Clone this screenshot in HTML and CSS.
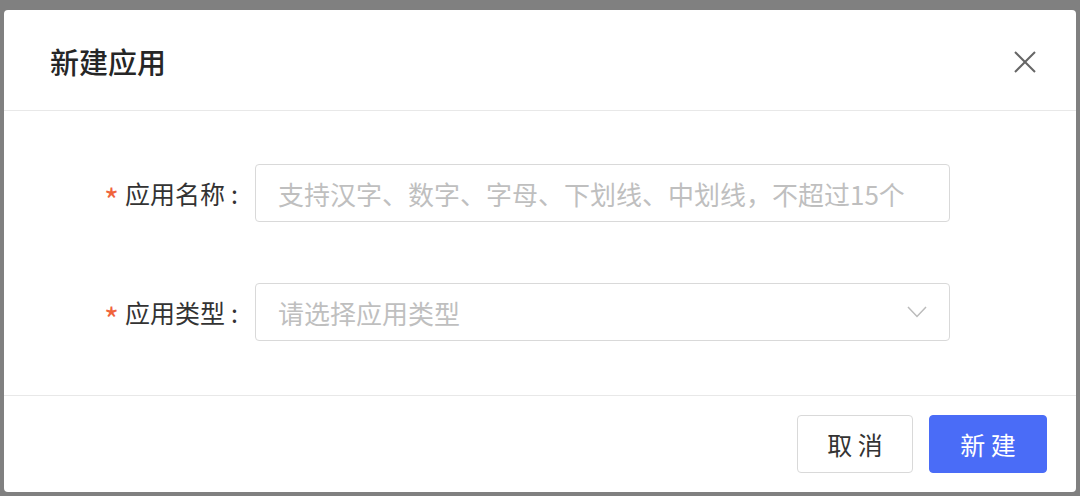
FILE: index.html
```html
<!DOCTYPE html>
<html>
	<head>
		<meta charset="utf-8">
		<link rel="stylesheet" href="styles.css">
		<title>新建应用</title>
	</head>
	<body>
		<div class="dialog">
			<div class="dialog-header">
				<span class="dialog-title">新建应用</span>
				<span class="dialog-close">
					<svg width="22" height="22" viewBox="0 0 22 22"><path d="M1 1 L21 21 M21 1 L1 21" stroke="#666" stroke-width="2" fill="none"/></svg>
				</span>
			</div>
			<div class="dialog-body">
				<div class="form-row">
					<label class="form-label"><span class="required">*</span>应用名称<span class="colon">:</span></label>
					<div class="form-input">
						<span class="placeholder">支持汉字、数字、字母、下划线、中划线，不超过15个</span>
					</div>
				</div>
				<div class="form-row">
					<label class="form-label"><span class="required">*</span>应用类型<span class="colon">:</span></label>
					<div class="form-input form-select">
						<span class="placeholder">请选择应用类型</span>
						<svg width="20" height="12" viewBox="0 0 20 12"><path d="M1 1 L10 10.5 L19 1" stroke="#bbb" stroke-width="1.5" fill="none"/></svg>
					</div>
				</div>
			</div>
			<div class="dialog-footer">
				<button class="btn">取 消</button>
				<button class="btn btn-primary">新 建</button>
			</div>
		</div>
	</body>
</html>
```

FILE: styles.css
```css
body {
	margin: 0;
	background-color: #808080;
	font-family: "Noto Sans CJK SC", "Noto Sans", sans-serif;
}
.dialog {
	margin: 10px 4px 4px 4px;
	height: 482px;
	background-color: #fff;
	border-radius: 4px;
	display: flex;
	flex-direction: column;
}
.dialog-header {
	height: 100px;
	border-bottom: 1px solid #e8e8e8;
	padding: 0 40px 0 46px;
	display: flex;
	align-items: center;
	justify-content: space-between;
}
.dialog-title {
	font-size: 29px;
	font-weight: 500;
	color: #262626;
	padding-top: 2px;
}
.dialog-close {
	display: flex;
	margin-top: 3px;
}
.dialog-body {
	flex: 1;
	padding-top: 53px;
	display: flex;
	flex-direction: column;
	gap: 61px;
}
.form-row {
	display: flex;
	align-items: center;
}
.form-label {
	width: 234px;
	margin-right: 17px;
	display: flex;
	justify-content: flex-end;
	align-items: center;
	font-size: 25px;
	color: #333;
}
.required {
	color: #f0643c;
	margin-right: 6px;
	font-size: 32px;
	line-height: 1;
	padding-top: 12px;
}
.colon {
	margin-left: 6px;
}
.form-input {
	border: 1px solid #d9d9d9;
	border-radius: 4px;
	padding: 0 22px 0 22px;
	box-sizing: border-box;
	width: 695px;
	height: 58px;
	display: flex;
	align-items: center;
	justify-content: space-between;
}
.placeholder {
	font-size: 26px;
	color: #bfbfbf;
}
.dialog-footer {
	height: 96px;
	border-top: 1px solid #e8e8e8;
	padding: 0 29px;
	display: flex;
	align-items: center;
	justify-content: flex-end;
	gap: 16px;
}
.btn {
	width: 116px;
	height: 58px;
	border: 1px solid #d9d9d9;
	border-radius: 4px;
	background-color: #fff;
	color: #333;
	font-family: "Noto Sans CJK SC", sans-serif;
	font-size: 25px;
}
.btn-primary {
	width: 118px;
	background-color: #4a6cf7;
	border-color: #4a6cf7;
	color: #fff;
}
```
